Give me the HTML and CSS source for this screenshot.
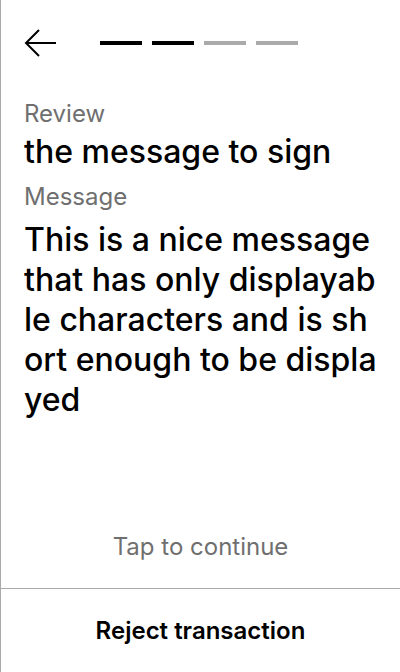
FILE: index.html
```html
<!DOCTYPE html>
<html>
<head>
<meta charset="utf-8">
<link rel="stylesheet" href="styles.css">
</head>
<body>
<div class="screen">
  <div class="header">
    <svg class="back" width="32" height="28" viewBox="0 0 32 28">
      <path d="M32 14H3M15 1L2 14L15 27" fill="none" stroke="#000" stroke-width="2"/>
    </svg>
    <div class="progress">
      <span class="seg on"></span>
      <span class="seg on"></span>
      <span class="seg"></span>
      <span class="seg"></span>
    </div>
  </div>
  <div class="content">
    <div class="label">Review</div>
    <div class="title">the message to sign</div>
    <div class="label label-msg">Message</div>
    <div class="value">This is a nice message that has only displayable characters and is short enough to be displayed</div>
  </div>
  <div class="tap">Tap to continue</div>
  <div class="footer">Reject transaction</div>
</div>
</body>
</html>
```

FILE: styles.css
```css
html, body {
  margin: 0;
  padding: 0;
  background: #fff;
}
body {
  font-family: Inter, "Noto Sans", sans-serif;
  color: #000;
}
.screen {
  width: 400px;
  height: 672px;
  box-sizing: border-box;
  border-left: 1px solid #aaa;
  display: flex;
  flex-direction: column;
}
.header {
  height: 86px;
  display: flex;
  align-items: center;
  padding-left: 23px;
}
.back {
  display: block;
}
.progress {
  display: flex;
  gap: 10px;
  margin-left: 44px;
}
.seg {
  width: 42px;
  height: 4px;
  background: #aaa;
}
.seg.on {
  background: #000;
}
.content {
  padding: 14px 23px 0 23px;
  flex: 1;
}
.label {
  font-size: 24px;
  line-height: 28px;
  color: #6f6f6f;
}
.label-msg {
  margin-top: 11px;
}
.title {
  font-size: 32px;
  line-height: 40px;
  font-weight: 450;
  margin-top: 4px;
}
.value {
  font-size: 32px;
  line-height: 40px;
  font-weight: 450;
  word-break: break-all;
  margin-top: 9px;
}
.tap {
  text-align: center;
  font-size: 24px;
  line-height: 32px;
  color: #6f6f6f;
  margin-bottom: 25px;
}
.footer {
  border-top: 1px solid #aaa;
  height: 83px;
  display: flex;
  align-items: center;
  justify-content: center;
  font-size: 24px;
  line-height: 32px;
  font-weight: 600;
}
```
